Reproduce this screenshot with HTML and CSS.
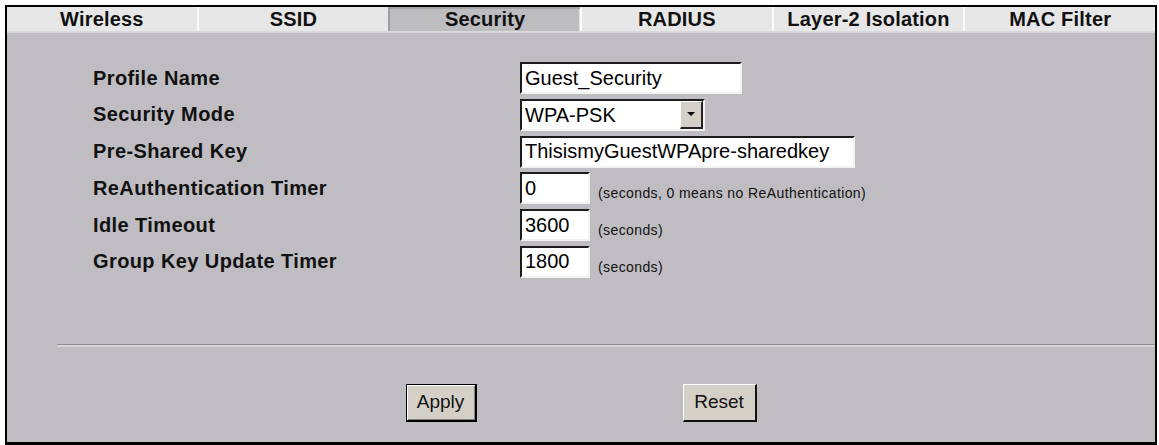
FILE: index.html
```html
<!DOCTYPE html>
<html lang="en">
<head>
    <meta charset="UTF-8">
    <title>Wireless Security</title>
    <link rel="stylesheet" href="styles.css">
</head>
<body>
    <div class="panel">
        <div class="tabs">
            <div class="tab">Wireless</div>
            <div class="tab">SSID</div>
            <div class="tab active">Security</div>
            <div class="tab">RADIUS</div>
            <div class="tab">Layer-2 Isolation</div>
            <div class="tab">MAC Filter</div>
        </div>

        <div class="form">
            <label class="label">Profile Name</label>
            <div class="field"><input class="text name" type="text" value="Guest_Security"></div>

            <label class="label">Security Mode</label>
            <div class="field">
                <div class="select">
                    <span class="select-value">WPA-PSK</span>
                    <span class="select-arrow"><i></i></span>
                </div>
            </div>

            <label class="label">Pre-Shared Key</label>
            <div class="field"><input class="text key" type="text" value="ThisismyGuestWPApre-sharedkey"></div>

            <label class="label">ReAuthentication Timer</label>
            <div class="field">
                <input class="text short" type="text" value="0">
                <span class="hint">(seconds, 0 means no ReAuthentication)</span>
            </div>

            <label class="label">Idle Timeout</label>
            <div class="field">
                <input class="text short" type="text" value="3600">
                <span class="hint">(seconds)</span>
            </div>

            <label class="label">Group Key Update Timer</label>
            <div class="field">
                <input class="text short" type="text" value="1800">
                <span class="hint">(seconds)</span>
            </div>
        </div>

        <hr class="sep">

        <div class="actions">
            <button class="btn default">Apply</button>
            <button class="btn">Reset</button>
        </div>
    </div>
</body>
</html>
```

FILE: styles.css
```css
body {
    margin: 0;
    background: #fff;
    font-family: "Liberation Sans", Arial, sans-serif;
    color: #000;
}

.panel {
    margin: 5px 0 0 5px;
    width: 1152px;
    height: 440px;
    box-sizing: border-box;
    border: 2px solid #000;
    border-bottom-width: 3px;
    background: #bfbdc1;
}

/* tab strip */
.tabs {
    display: flex;
    height: 24px;
    border-bottom: 2px solid #d9d8db;
}

.tab {
    flex: 1;
    background: #e7e7e7;
    border-left: 2px solid #fafafa;
    text-align: center;
    font-size: 20px;
    font-weight: bold;
    line-height: 24px;
    letter-spacing: 0.2px;
    color: #111;
}

.tab:first-child {
    border-left: 0;
}

.tab.active {
    background: #bdbcbf;
    border-left-color: #9e9da0;
    box-shadow: inset 0 2px 0 #a6a5a8, inset -1px 0 0 #e4e4e4;
}

/* form rows */
.form {
    display: grid;
    grid-template-columns: 427px auto;
    row-gap: 4.8px;
    padding: 29px 0 0 86px;
}

.label {
    display: flex;
    align-items: center;
    height: 32px;
    font-size: 20px;
    font-weight: bold;
    letter-spacing: 0.4px;
    color: #111;
}

.field {
    display: flex;
    align-items: flex-end;
    gap: 8px;
    height: 32px;
}

.text {
    box-sizing: border-box;
    height: 32px;
    margin: 0;
    padding: 0 3px;
    border-style: solid;
    border-width: 2px;
    border-color: #1c1c1c #f2f2f2 #f2f2f2 #1c1c1c;
    background: #fff;
    font-family: "Liberation Sans", Arial, sans-serif;
    font-size: 20px;
    color: #000;
    outline: none;
}

.name { width: 222px; }
.key { width: 335px; }
.short { width: 70px; }

.hint {
    margin-bottom: 3px;
    font-size: 14px;
    line-height: 16px;
    letter-spacing: 0.4px;
    color: #111;
}

.select {
    display: flex;
    box-sizing: border-box;
    width: 185px;
    height: 32px;
    border-style: solid;
    border-width: 2px;
    border-color: #1c1c1c #f2f2f2 #f2f2f2 #1c1c1c;
    background: #fff;
}

.select-value {
    flex: 1;
    padding-left: 3px;
    font-size: 20px;
    line-height: 28px;
}

.select-arrow {
    display: flex;
    align-items: center;
    justify-content: center;
    width: 20px;
    background: #d4d0c8;
    border-style: solid;
    border-width: 1px 2px 2px 1px;
    border-color: #fff #222 #222 #fff;
}

.select-arrow i {
    width: 0;
    height: 0;
    border-left: 4px solid transparent;
    border-right: 4px solid transparent;
    border-top: 4px solid #000;
}

.sep {
    margin: 66px 0 0 50px;
    height: 0;
    border: 0;
    border-top: 1px solid #8f8e91;
    border-bottom: 2px solid #d6d5d8;
}

.actions {
    display: flex;
    justify-content: center;
    gap: 206px;
    margin-top: 37px;
}

.btn {
    box-sizing: border-box;
    width: 74px;
    height: 38px;
    padding: 0;
    background: #d4d0c8;
    border-style: solid;
    border-width: 1px 2px 2px 1px;
    border-color: #fff #111 #111 #fff;
    font-family: "Liberation Sans", Arial, sans-serif;
    font-size: 19px;
    color: #111;
}

.btn.default {
    width: 71px;
    border-color: #000;
    box-shadow: inset 1px 1px 0 #fff, inset -1px -1px 0 #808080;
}
```
